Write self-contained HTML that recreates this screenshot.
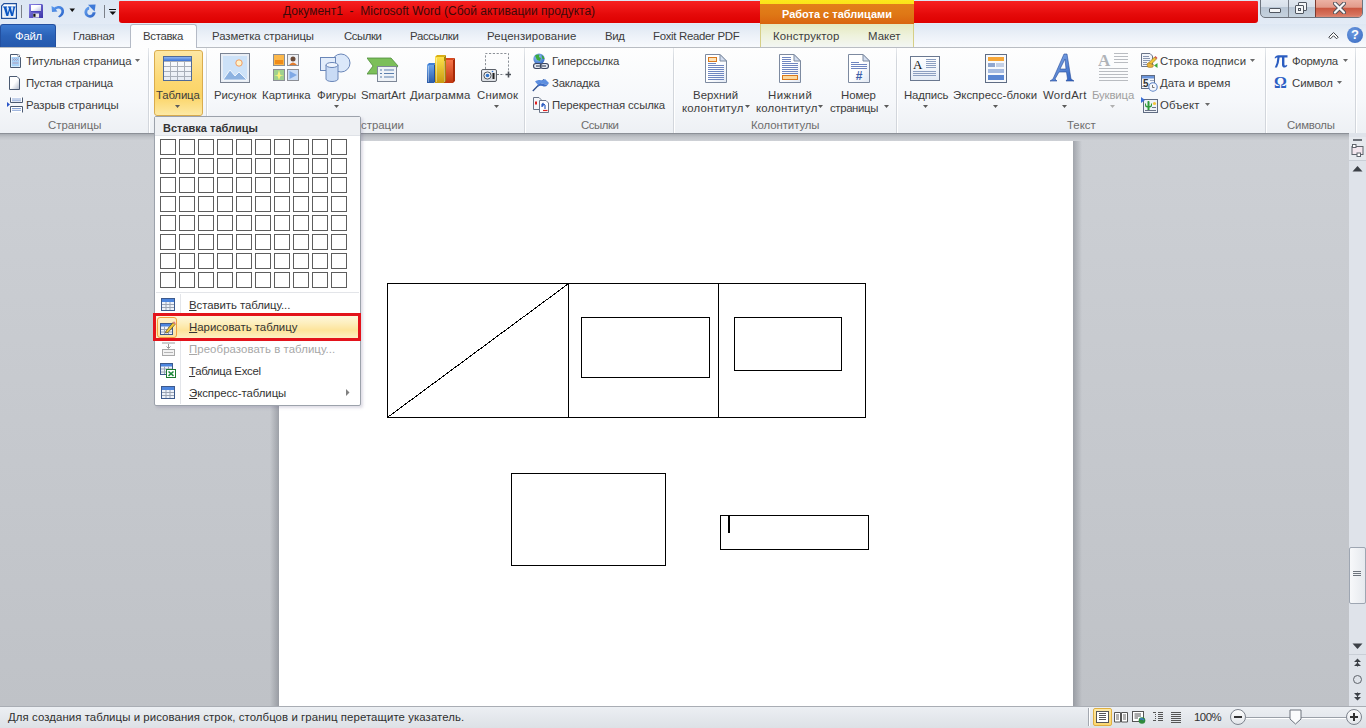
<!DOCTYPE html>
<html><head><meta charset="utf-8">
<style>
*{box-sizing:border-box;margin:0;padding:0}
html,body{width:1366px;height:728px;overflow:hidden;background:#c6c9cf;font-family:"Liberation Sans",sans-serif;font-size:11.4px;color:#3c3c3c}
.a{position:absolute}
.t{position:absolute;white-space:nowrap;line-height:14px}
#title{left:0;top:0;width:1366px;height:24px;background:linear-gradient(#dbe6f3,#e3ebf6)}
#redbar{left:119px;top:1px;width:1139px;height:22px;border-radius:1px 1px 3px 3px;background:linear-gradient(#f72121,#e50a0a 60%,#de0000)}
#tabs{left:0;top:24px;width:1366px;height:23px;background:linear-gradient(#dde7f3,#ecf1f8 50%,#f8fafd)}
#ribbon{left:0;top:47px;width:1366px;height:87px;background:linear-gradient(#fefefe,#f6f8fb 60%,#edf0f4);border-top:1px solid #b9bdc3}
#rbot{left:0;top:133px;width:1366px;height:1px;background:#8c9097}
#docshadow{left:0;top:134px;width:1349px;height:6px;background:linear-gradient(#a9adb3,#c0c3c8 50%,#cbced3)}
#doc{left:0;top:133px;width:1349px;height:573px;background:linear-gradient(#cdd0d5,#bfc2c7)}
#page{left:279px;top:141px;width:794px;height:565px;background:#fff}
#status{left:0;top:706px;width:1366px;height:22px;background:linear-gradient(#eceff3,#dde1e6);border-top:1px solid #a9adb4}
#vscroll{left:1349px;top:133px;width:17px;height:573px;background:#dfe3ea}
.sep{position:absolute;width:1px;background:linear-gradient(#e6e9ed,#d2d6dc 15%,#d2d6dc);box-shadow:1px 0 0 #fff}
.gl{position:absolute;top:118px;color:#6d6d6d;line-height:14px;white-space:nowrap}
</style></head><body>
<div id="title" class="a"></div>
<div id="redbar" class="a"></div>
<div id="tabs" class="a"></div>
<div id="ribbon" class="a"></div>
<!-- ===== RIBBON ===== -->
<div class="sep" style="left:148px;top:48px;height:85px"></div>
<div class="sep" style="left:206px;top:48px;height:85px"></div>
<div class="sep" style="left:524px;top:48px;height:85px"></div>
<div class="sep" style="left:673px;top:48px;height:85px"></div>
<div class="sep" style="left:896px;top:48px;height:85px"></div>
<div class="sep" style="left:1265px;top:48px;height:85px"></div>
<div class="sep" style="left:1355px;top:48px;height:85px"></div>
<!-- Страницы -->
<svg class="a" style="left:9px;top:53px" width="13" height="16" viewBox="0 0 13 16">
 <path d="M1.5 1.5 H8.5 L11.5 4.5 V14.5 H1.5Z" fill="#fff" stroke="#4b5a72"/>
 <rect x="2.5" y="4" width="8" height="9.5" fill="#a8d2f8"/>
 <path d="M3.5 5.5 L4.5 6.5 L5.5 5.5 L6.5 6.5 L7.5 5.5 L8.5 6.5 L9.5 5.5 M3.5 7.5 L4.5 6.5 L5.5 7.5 L6.5 6.5 L7.5 7.5 L8.5 6.5 L9.5 7.5" stroke="#a58aa8" stroke-width="0.6" fill="none"/>
 <path d="M3.5 10 H9.5" stroke="#b58aa0" stroke-width="0.7"/>
 <circle cx="9.6" cy="2.6" r="1" fill="#fff" stroke="#4b5a72" stroke-width="0.6"/>
</svg>
<div class="t" style="left:26px;top:54px;letter-spacing:-0.10px">Титульная страница</div>
<svg class="a" style="left:135px;top:59px" width="6" height="4" viewBox="0 0 6 4"><path d="M0 0H5L2.5 3Z" fill="#6a6a6a"/></svg>
<svg class="a" style="left:8px;top:75px" width="13" height="16" viewBox="0 0 13 16">
 <defs><linearGradient id="pg1" x1="0" y1="0" x2="1" y2="1"><stop offset="0.5" stop-color="#fff"/><stop offset="1" stop-color="#aeb7c7"/></linearGradient></defs>
 <path d="M1.5 1.5 H9 L11.5 4 V14.5 H1.5Z" fill="url(#pg1)" stroke="#4b5a72"/>
</svg>
<div class="t" style="left:26px;top:76px;letter-spacing:-0.15px">Пустая страница</div>
<svg class="a" style="left:7px;top:97px" width="17" height="16" viewBox="0 0 17 16">
 <path d="M3.5 0.5 V5.5 H15.5 V0.5" fill="#fff" stroke="#4b5a72"/>
 <path d="M5 2 H14 M5 3.8 H14" stroke="#8aa6d8"/>
 <path d="M3.5 15.5 V9.5 H15.5 V15.5" fill="#fff" stroke="#4b5a72"/>
 <path d="M5 11.5 H14 M5 13.3 H14" stroke="#8aa6d8"/>
 <path d="M0 5 L3 7.5 L0 10Z" fill="#2a55c8"/>
</svg>
<div class="t" style="left:26px;top:98px;letter-spacing:-0.05px">Разрыв страницы</div>
<div class="gl" style="left:48px;letter-spacing:-0.01px">Страницы</div>
<!-- Таблица button -->
<div class="a" style="left:154px;top:50px;width:49px;height:66px;border:1px solid #d9ac4e;border-radius:3px;background:linear-gradient(#fde7a4,#fcd873 45%,#fbd466 70%,#fde9a5)"></div>
<svg class="a" style="left:163px;top:56px" width="30" height="26" viewBox="0 0 30 26" shape-rendering="crispEdges">
 <defs><linearGradient id="th" x1="0" y1="0" x2="0" y2="1"><stop offset="0" stop-color="#8db4f0"/><stop offset="1" stop-color="#3d72d4"/></linearGradient>
 <linearGradient id="tc" x1="0" y1="0" x2="0" y2="1"><stop offset="0" stop-color="#ffffff"/><stop offset="1" stop-color="#e6ebf3"/></linearGradient></defs>
 <rect x="0.5" y="0.5" width="28" height="24" fill="url(#tc)" stroke="#4f6a98"/>
 <rect x="1" y="1" width="27" height="4" fill="url(#th)"/>
 <path d="M1 5.5 H28 M1 10.5 H28 M1 15.5 H28 M1 20.5 H28 M7.5 5 V24 M14.5 5 V24 M21.5 5 V24" stroke="#a9afb9"/>
</svg>
<div class="t" style="left:156px;top:88px;letter-spacing:-0.14px">Таблица</div>
<svg class="a" style="left:175px;top:105px" width="6" height="4" viewBox="0 0 6 4"><path d="M0 0H5L2.5 3Z" fill="#5a5a5a"/></svg>
<!-- Иллюстрации -->
<svg class="a" style="left:220px;top:53px" width="31" height="31" viewBox="0 0 31 31">
 <rect x="0.5" y="0.5" width="29" height="29" fill="#e9eef5" stroke="#7b8494"/>
 <rect x="3" y="3" width="24" height="24" fill="#cde2f8"/>
 <circle cx="19" cy="10" r="3.2" fill="#fff2c8" stroke="#f09a62" stroke-width="1"/>
 <path d="M3 27 L10 17 L15 23 L19 19 L27 27Z" fill="#8db2e0" stroke="#fff" stroke-width="0.8"/>
</svg>
<div class="t" style="left:214px;top:88px;letter-spacing:-0.10px">Рисунок</div>
<svg class="a" style="left:273px;top:54px" width="26" height="28" viewBox="0 0 26 28">
 <rect x="0.5" y="0.5" width="11" height="11" fill="#fcb84b" stroke="#8c8f96"/>
 <rect x="2" y="6" width="8" height="4" fill="#f08c1a"/>
 <rect x="14.5" y="0.5" width="11" height="11" fill="#eef0f4" stroke="#8c8f96"/>
 <circle cx="20" cy="5" r="2.5" fill="#6b4b3a"/><path d="M16 11 Q20 6 24 11Z" fill="#e27b2c"/>
 <rect x="0.5" y="15.5" width="11" height="11" fill="#9fd18e" stroke="#8c8f96"/>
 <path d="M6 16 L7.5 21 L11 21.5 L7.5 22 L6 26 L4.5 22 L1 21.5 L4.5 21Z" fill="#f8f27a"/>
 <rect x="14.5" y="15.5" width="11" height="11" fill="#c9dcf5" stroke="#8c8f96"/>
 <path d="M16.5 17 L24 21 L16.5 25Z" fill="#7fa9e6"/>
</svg>
<div class="t" style="left:262px;top:88px;letter-spacing:0.03px">Картинка</div>
<svg class="a" style="left:320px;top:53px" width="31" height="31" viewBox="0 0 31 31">
 <circle cx="21" cy="10" r="9" fill="#dbe8fa" stroke="#6a86b8"/>
 <rect x="0.5" y="4.5" width="15" height="13" fill="#e3edfb" stroke="#6a86b8"/>
 <path d="M6 12 V26 A6 2.5 0 0 0 18 26 V12" fill="#c9dbf5" stroke="#6a86b8"/>
 <ellipse cx="12" cy="12" rx="6" ry="2.5" fill="#eef4fd" stroke="#6a86b8"/>
</svg>
<div class="t" style="left:317px;top:88px;letter-spacing:-0.03px">Фигуры</div>
<svg class="a" style="left:334px;top:105px" width="6" height="4" viewBox="0 0 6 4"><path d="M0 0H5L2.5 3Z" fill="#5a5a5a"/></svg>
<svg class="a" style="left:367px;top:56px" width="32" height="27" viewBox="0 0 32 27">
 <path d="M0 2 H24 L31 10 L24 18 H0 L6 10Z" fill="#7cbf5a" stroke="#4e8d3a" stroke-width="0.8"/>
 <rect x="10.5" y="10.5" width="19" height="15" fill="#eef2f7" stroke="#7d8797"/>
 <path d="M13 14 H15 M17 14 H27 M13 17.5 H15 M17 17.5 H27 M13 21 H15 M17 21 H27" stroke="#5b7fae" stroke-width="1.2"/>
</svg>
<div class="t" style="left:361px;top:88px;letter-spacing:-0.09px">SmartArt</div>
<svg class="a" style="left:427px;top:54px" width="30" height="30" viewBox="0 0 30 30">
 <defs>
  <linearGradient id="cb" x1="0" y1="0" x2="0" y2="1"><stop offset="0" stop-color="#6aa2e6"/><stop offset="1" stop-color="#2a5aa8"/></linearGradient>
  <linearGradient id="cy" x1="0" y1="0" x2="0" y2="1"><stop offset="0" stop-color="#fde24a"/><stop offset="1" stop-color="#c89a10"/></linearGradient>
  <linearGradient id="cr" x1="0" y1="0" x2="0" y2="1"><stop offset="0" stop-color="#f6764a"/><stop offset="1" stop-color="#c0360e"/></linearGradient>
 </defs>
 <path d="M0 11 L2 9 H9 L7 11Z" fill="#3f7fd6"/><rect x="0" y="11" width="7" height="18" fill="url(#cb)"/><path d="M7 11 L9 9 V27 L7 29Z" fill="#1f4f9e"/>
 <path d="M16 6 L18 4 H28 L26 6Z" fill="#d8481e"/><rect x="16" y="6" width="10" height="23" fill="url(#cr)"/><path d="M26 6 L28 4 V27 L26 29Z" fill="#a82a08"/>
 <path d="M8 3 L10 1 H19 L17 3Z" fill="#d9b014"/><rect x="8" y="3" width="9" height="26" fill="url(#cy)"/><path d="M17 3 L19 1 V27 L17 29Z" fill="#a88408"/>
 <path d="M1.5 12 V28 M9.5 4 V28 M17.5 7 V28" stroke="#fff" stroke-opacity="0.5" stroke-width="0.8"/>
</svg>
<div class="t" style="left:410px;top:88px;letter-spacing:0.13px">Диаграмма</div>
<svg class="a" style="left:480px;top:52px" width="32" height="31" viewBox="0 0 32 31">
 <path d="M5.5 17 V1.5 H28.5 V21" fill="none" stroke="#8c9198" stroke-width="1" stroke-dasharray="2.2 1.6"/>
 <rect x="1.5" y="17.5" width="15" height="12" rx="1.5" fill="#dcdfe4" stroke="#5b6068"/>
 <rect x="2.5" y="18.5" width="13" height="2" fill="#f4f5f7"/>
 <circle cx="7.5" cy="23.5" r="3.6" fill="#f0f2f4" stroke="#50555c"/>
 <circle cx="7.5" cy="23.5" r="1.8" fill="#2f74cc"/>
 <rect x="12.5" y="21" width="2" height="6" fill="#222"/>
 <circle cx="12.5" cy="19.5" r="0.8" fill="#2f74cc"/>
 <path d="M17 22.5 H24" stroke="#777c84" stroke-width="1.2" stroke-dasharray="2 1.4"/>
 <path d="M25.5 22.5 H31 M28.5 19.5 V25.5" stroke="#4a4f57" stroke-width="1.6"/>
</svg>
<div class="t" style="left:477px;top:88px;letter-spacing:0.18px">Снимок</div>
<svg class="a" style="left:494px;top:105px" width="6" height="4" viewBox="0 0 6 4"><path d="M0 0H5L2.5 3Z" fill="#5a5a5a"/></svg>
<div class="gl" style="left:331px">Иллюстрации</div>
<!-- Ссылки -->
<svg class="a" style="left:532px;top:53px" width="18" height="17" viewBox="0 0 18 17">
 <defs><radialGradient id="gl" cx="0.4" cy="0.35" r="0.7"><stop offset="0" stop-color="#9fd0ff"/><stop offset="1" stop-color="#2f62c0"/></radialGradient></defs>
 <circle cx="7" cy="6" r="5.6" fill="url(#gl)"/>
 <path d="M3 2.5 Q5 1 7.5 1.5 L7 4 L9 5 L8 8 L5 7 L4 5 Z M9.5 2 Q12 3 12.5 6 L10.5 6 Z" fill="#3caa3c"/>
 <g fill="#e4e9f2" stroke="#3a4560" stroke-width="1.1">
  <rect x="1.5" y="10.5" width="8" height="5" rx="2.5"/>
  <rect x="8.5" y="10.5" width="8" height="5" rx="2.5"/>
 </g>
 <path d="M4 13 H14" stroke="#3a4560" stroke-width="1.1"/>
</svg>
<div class="t" style="left:552px;top:54px;letter-spacing:-0.11px">Гиперссылка</div>
<svg class="a" style="left:532px;top:75px" width="18" height="17" viewBox="0 0 18 17">
 <path d="M0.8 16 L12 4.5" stroke="#2f4f8e" stroke-width="1.3"/>
 <path d="M6 10 Q9 7.5 12 9 Q15 10.5 17 8 L13 4 Q11 6 8 5 Q5 4.5 3 6.5Z" fill="#5c8ee0"/>
 <path d="M6 10 Q9 7.5 12 9 Q15 10.5 17 8 L15.5 10 Q13.5 12.5 10.5 11 Q8 10 5.5 12Z" fill="#3f6fc8"/>
</svg>
<div class="t" style="left:552px;top:76px;letter-spacing:-0.24px">Закладка</div>
<svg class="a" style="left:533px;top:97px" width="17" height="17" viewBox="0 0 17 17">
 <path d="M0.5 0.5 H6 L8 2.5 V12.5 H0.5Z" fill="#f4f6fa" stroke="#6a7488"/>
 <rect x="2" y="4.5" width="2" height="3" fill="#e02020"/>
 <path d="M6.5 3.5 H13 L15.5 6 V15.5 H6.5Z" fill="#fff" stroke="#6a7488"/>
 <path d="M9 10 L9 7.5 L12 7.5 M9 7.5 L10.5 6 M9 7.5 L10.5 9" stroke="#2d5ec2" stroke-width="1.2" fill="none"/>
 <path d="M12 8 V12" stroke="#2d5ec2" stroke-width="1.2"/>
 <path d="M10 13.5 H14.5" stroke="#e02020" stroke-width="1.2"/>
</svg>
<div class="t" style="left:552px;top:98px;letter-spacing:-0.13px">Перекрестная ссылка</div>
<div class="gl" style="left:581px;letter-spacing:-0.44px">Ссылки</div>
<!-- Колонтитулы -->
<svg class="a" style="left:705px;top:54px" width="23" height="30" viewBox="0 0 23 30">
 <defs><linearGradient id="dg1" x1="0" y1="0" x2="1" y2="1"><stop offset="0.5" stop-color="#fff"/><stop offset="1" stop-color="#e2e9f4"/></linearGradient></defs>
 <path d="M0.5 0.5 H15 L21.5 7 V28.5 H0.5Z" fill="url(#dg1)" stroke="#7d8aa0"/>
 <path d="M15 0.5 V7 H21.5Z" fill="#d4def0" stroke="#7d8aa0" stroke-linejoin="round"/>
 <g shape-rendering="crispEdges"><rect x="3.5" y="3.5" width="8" height="4" fill="#fde3b8" stroke="#d9791e"/><path d="M3 9.5 H11 M3 11.5 H19 M3 13.5 H19 M3 15.5 H19 M3 17.5 H19 M3 19.5 H19 M3 21.5 H19 M3 23.5 H19 M3 25.5 H19" stroke="#6f86c0"/></g>
</svg>
<div class="t" style="left:693px;top:88px;letter-spacing:0.04px">Верхний</div>
<div class="t" style="left:682px;top:101px;letter-spacing:0.19px">колонтитул</div>
<svg class="a" style="left:745px;top:105px" width="6" height="4" viewBox="0 0 6 4"><path d="M0 0H5L2.5 3Z" fill="#5a5a5a"/></svg>
<svg class="a" style="left:779px;top:54px" width="23" height="30" viewBox="0 0 23 30">
 <defs><linearGradient id="dg2" x1="0" y1="0" x2="1" y2="1"><stop offset="0.5" stop-color="#fff"/><stop offset="1" stop-color="#e2e9f4"/></linearGradient></defs>
 <path d="M0.5 0.5 H15 L21.5 7 V28.5 H0.5Z" fill="url(#dg2)" stroke="#7d8aa0"/>
 <path d="M15 0.5 V7 H21.5Z" fill="#d4def0" stroke="#7d8aa0" stroke-linejoin="round"/>
 <g shape-rendering="crispEdges"><path d="M3 3.5 H12 M3 5.5 H12 M3 7.5 H12 M3 9.5 H19 M3 11.5 H19 M3 13.5 H19 M3 15.5 H19 M3 17.5 H19 M3 19.5 H19" stroke="#6f86c0"/><rect x="3.5" y="21.5" width="15" height="4" fill="#fcd9a0" stroke="#d9791e"/></g>
</svg>
<div class="t" style="left:768px;top:88px;letter-spacing:0.51px">Нижний</div>
<div class="t" style="left:756px;top:101px;letter-spacing:0.19px">колонтитул</div>
<svg class="a" style="left:818px;top:105px" width="6" height="4" viewBox="0 0 6 4"><path d="M0 0H5L2.5 3Z" fill="#5a5a5a"/></svg>
<svg class="a" style="left:848px;top:54px" width="23" height="30" viewBox="0 0 23 30">
 <defs><linearGradient id="dg3" x1="0" y1="0" x2="1" y2="1"><stop offset="0.5" stop-color="#fff"/><stop offset="1" stop-color="#e2e9f4"/></linearGradient></defs>
 <path d="M0.5 0.5 H15 L21.5 7 V28.5 H0.5Z" fill="url(#dg3)" stroke="#7d8aa0"/>
 <path d="M15 0.5 V7 H21.5Z" fill="#d4def0" stroke="#7d8aa0" stroke-linejoin="round"/>
 <g shape-rendering="crispEdges"><path d="M3 8.5 H11 M3 10.5 H19 M3 12.5 H19 M3 14.5 H19" stroke="#6f86c0"/></g>
 <text x="11" y="26" font-family="Liberation Sans" font-weight="bold" font-size="12" fill="#3e5fa8" text-anchor="middle">#</text>
</svg>
<div class="t" style="left:841px;top:88px;letter-spacing:-0.05px">Номер</div>
<div class="t" style="left:830px;top:101px;letter-spacing:-0.37px">страницы</div>
<svg class="a" style="left:884px;top:105px" width="6" height="4" viewBox="0 0 6 4"><path d="M0 0H5L2.5 3Z" fill="#5a5a5a"/></svg>
<div class="gl" style="left:751px;letter-spacing:-0.08px">Колонтитулы</div>
<!-- Текст -->
<svg class="a" style="left:910px;top:56px" width="30" height="25" viewBox="0 0 30 25">
 <defs><linearGradient id="nd" x1="0" y1="0" x2="0" y2="1"><stop offset="0" stop-color="#fff"/><stop offset="1" stop-color="#e4ecf6"/></linearGradient></defs>
 <rect x="0.5" y="0.5" width="29" height="24" fill="url(#nd)" stroke="#6a7890"/>
 <text x="3" y="13" font-family="Liberation Serif" font-size="13" fill="#111">A</text>
 <g shape-rendering="crispEdges" stroke="#8c9fc0" stroke-width="1"><path d="M16 3.5 H26 M16 5.5 H26 M16 7.5 H26 M16 9.5 H26 M16 11.5 H26 M3 15.5 H26 M3 17.5 H26 M3 19.5 H26"/></g>
</svg>
<div class="t" style="left:904px;top:88px;letter-spacing:-0.15px">Надпись</div>
<svg class="a" style="left:923px;top:105px" width="6" height="4" viewBox="0 0 6 4"><path d="M0 0H5L2.5 3Z" fill="#5a5a5a"/></svg>
<svg class="a" style="left:985px;top:54px" width="23" height="30" viewBox="0 0 23 30">
 <rect x="0.5" y="0.5" width="21" height="28" fill="#f7f9fc" stroke="#5e6c84"/>
 <rect x="3" y="3" width="16" height="4" fill="#f6a637"/>
 <rect x="3" y="9" width="7" height="4" fill="#8fa6cf"/><path d="M11 10 H19 M11 12 H19" stroke="#8fa6cf"/>
 <rect x="3" y="15" width="16" height="4" fill="#a6bbe0"/>
 <rect x="3" y="21" width="16" height="5" fill="#5a86d2"/>
</svg>
<div class="t" style="left:953px;top:88px;letter-spacing:0.04px">Экспресс-блоки</div>
<svg class="a" style="left:993px;top:105px" width="6" height="4" viewBox="0 0 6 4"><path d="M0 0H5L2.5 3Z" fill="#5a5a5a"/></svg>
<svg class="a" style="left:1049px;top:53px" width="26" height="30" viewBox="0 0 26 30">
 <defs><linearGradient id="wa" x1="0" y1="0" x2="1" y2="1"><stop offset="0" stop-color="#8fb4ec"/><stop offset="1" stop-color="#2b5fc0"/></linearGradient></defs>
 <path d="M15 1 L18 1 L22 26 L25 28 L17 28 L18.5 26 L17.5 19 L10 19 L6 26 L8 28 L1 28 L4 26Z M16 6 L11 16 L17 16Z" fill="url(#wa)" stroke="#254a98" stroke-width="0.6"/>
</svg>
<div class="t" style="left:1043px;top:88px;letter-spacing:0.29px">WordArt</div>
<svg class="a" style="left:1062px;top:105px" width="6" height="4" viewBox="0 0 6 4"><path d="M0 0H5L2.5 3Z" fill="#5a5a5a"/></svg>
<svg class="a" style="left:1098px;top:52px" width="32" height="32" viewBox="0 0 32 32">
 <text x="0" y="14" font-family="Liberation Serif" font-weight="bold" font-size="17" fill="#b0b3b8">A</text>
 <g shape-rendering="crispEdges" stroke="#b9bcc1" stroke-width="1"><path d="M16 1.5 H30 M16 4.5 H30 M16 7.5 H30 M16 10.5 H30 M1 16.5 H30 M1 19.5 H30 M1 22.5 H30 M1 25.5 H30 M1 28.5 H30"/></g>
</svg>
<div class="t" style="left:1092px;top:88px;color:#a0a0a0;letter-spacing:-0.15px">Буквица</div>
<svg class="a" style="left:1110px;top:105px" width="6" height="4" viewBox="0 0 6 4"><path d="M0 0H5L2.5 3Z" fill="#b0b0b0"/></svg>
<svg class="a" style="left:1141px;top:53px" width="17" height="16" viewBox="0 0 17 16">
 <path d="M0.5 0.5 H9 L11.5 3 V13.5 H0.5Z" fill="#f2f5fa" stroke="#6a7488"/>
 <g shape-rendering="crispEdges"><path d="M2 3.5 H8 M2 5.5 H9 M2 7.5 H9 M2 9.5 H6 M2 11.5 H6" stroke="#8a96b0"/></g>
 <path d="M13.5 4 L15.5 6 L9 12.5 L7 10.5Z" fill="#f2c43a" stroke="#8a6a10" stroke-width="0.6"/>
 <path d="M13.5 4 L14.5 3 L16.5 5 L15.5 6Z" fill="#d0504a"/>
 <path d="M6 11 Q7.5 9 9.5 10.5 Q11 12 12.5 11.5 L12 14 Q9 15 6.5 14Z" fill="#e8b23a" stroke="#9a6a18" stroke-width="0.5"/>
 <path d="M13 12.5 L16.5 10 V15Z" fill="#3aa83a"/>
</svg>
<div class="t" style="left:1160px;top:54px;letter-spacing:0.13px">Строка подписи</div>
<svg class="a" style="left:1250px;top:59px" width="6" height="4" viewBox="0 0 6 4"><path d="M0 0H5L2.5 3Z" fill="#6a6a6a"/></svg>
<svg class="a" style="left:1141px;top:75px" width="17" height="17" viewBox="0 0 17 17">
 <rect x="0.5" y="0.5" width="13" height="13" fill="#f4f6fa" stroke="#5f6b82"/>
 <rect x="1" y="1" width="12" height="2.5" fill="#6a94da"/>
 <g shape-rendering="crispEdges"><path d="M9 5.5 H13 M9 8.5 H13 M1 11.5 H5" stroke="#9aa6bc"/></g>
 <text x="2" y="12" font-family="Liberation Sans" font-weight="bold" font-size="10" fill="#333">5</text>
 <circle cx="12" cy="12" r="4.2" fill="#f4f7fc" stroke="#5b82c4" stroke-width="1.1"/>
 <path d="M11.5 10 V12.5 H13.5" stroke="#555" stroke-width="0.8" fill="none"/>
</svg>
<div class="t" style="left:1160px;top:76px;letter-spacing:-0.03px">Дата и время</div>
<svg class="a" style="left:1141px;top:97px" width="17" height="16" viewBox="0 0 17 16">
 <rect x="2.5" y="2.5" width="14" height="13" fill="#eef2f8" stroke="#5f6b82"/>
 <path d="M0 0 L4 3 L0 6Z" fill="#3a6fd8"/>
 <path d="M7 4 Q8.5 3.5 8.5 5 V9 Q10 9 10 7.5 V6.5 H11 V8 Q11 10.5 8.5 10.5 V13 H6.5 V10.5 Q4 10.5 4 8 V6.5 H5 V7.5 Q5 9 6.5 9 V5 Q6.5 4 7 4Z" fill="#2f9a3a"/>
 <circle cx="13.5" cy="6.5" r="1.6" fill="#f2c43a"/>
 <g shape-rendering="crispEdges"><path d="M11 10.5 H15 M4 13.5 H15" stroke="#6a7488"/></g>
</svg>
<div class="t" style="left:1160px;top:98px;letter-spacing:0.12px">Объект</div>
<svg class="a" style="left:1205px;top:103px" width="6" height="4" viewBox="0 0 6 4"><path d="M0 0H5L2.5 3Z" fill="#6a6a6a"/></svg>
<div class="gl" style="left:1067px">Текст</div>
<!-- Символы -->
<svg class="a" style="left:1274px;top:54px" width="14" height="14" viewBox="0 0 14 14"><path d="M0.5 4 Q1.5 1.2 4 1.2 H13.5 V3.6 H10.4 V10.4 Q10.4 11.6 11.6 11.6 Q12.4 11.6 12.8 10.8 L13.4 11.2 Q12.6 13.6 10.6 13.6 Q8 13.6 8 10.8 V3.6 H5.6 Q5.2 9.4 3 13.4 H0.8 Q3.2 9 3.4 3.6 Q2 3.6 1.2 4.6Z" fill="#2a5cc0"/></svg>
<div class="t" style="left:1292px;top:54px;letter-spacing:-0.26px">Формула</div>
<svg class="a" style="left:1343px;top:59px" width="6" height="4" viewBox="0 0 6 4"><path d="M0 0H5L2.5 3Z" fill="#6a6a6a"/></svg>
<div class="t" style="left:1274px;top:74px;font-family:'Liberation Serif';font-size:16px;color:#2d5fc4;line-height:18px;font-weight:bold">Ω</div>
<div class="t" style="left:1292px;top:76px;letter-spacing:-0.06px">Символ</div>
<svg class="a" style="left:1337px;top:81px" width="6" height="4" viewBox="0 0 6 4"><path d="M0 0H5L2.5 3Z" fill="#6a6a6a"/></svg>
<div class="gl" style="left:1287px;letter-spacing:-0.22px">Символы</div>

<div id="doc" class="a"></div>
<div id="docshadow" class="a"></div>
<div id="rbot" class="a"></div>
<div id="page" class="a"></div>
<div id="vscroll" class="a"></div>
<div id="status" class="a"></div>
<!-- page shadows -->
<div class="a" style="left:270px;top:141px;width:9px;height:565px;background:linear-gradient(90deg,rgba(0,0,0,0),rgba(80,85,95,0.35))"></div>
<div class="a" style="left:1073px;top:141px;width:9px;height:565px;background:linear-gradient(90deg,rgba(80,85,95,0.35),rgba(0,0,0,0))"></div>
<svg class="a" style="left:0;top:0" width="1366" height="728" shape-rendering="crispEdges">
 <g fill="none" stroke="#000" stroke-width="1">
  <rect x="387.5" y="283.5" width="478" height="134"/>
  <path d="M568.5 283.5 V417.5 M718.5 283.5 V417.5"/>
  <rect x="581.5" y="317.5" width="128" height="60"/>
  <rect x="734.5" y="317.5" width="107" height="53"/>
  <rect x="511.5" y="473.5" width="154" height="92"/>
  <rect x="720.5" y="515.5" width="148" height="34"/>
  <path d="M388 417 L568 284"/>
 </g>
 <rect x="728" y="516" width="2" height="17" fill="#000"/>
</svg>
<!-- scrollbar -->
<div class="a" style="left:1349px;top:137px;width:17px;height:24px;background:#e6e9ee;border-bottom:1px solid #c9ced6"></div>
<div class="a" style="left:1353px;top:139px;width:9px;height:2px;background:#6c7078"></div>
<svg class="a" style="left:1351px;top:144px" width="13" height="13" viewBox="0 0 13 13">
 <rect x="1" y="2.5" width="11" height="8" fill="#f3e6ee" stroke="#5f646c"/>
 <rect x="1.5" y="0.5" width="3.5" height="3" fill="#fff" stroke="#5f646c"/>
 <rect x="6" y="9" width="3.5" height="3.5" fill="#fff" stroke="#5f646c"/>
</svg>
<svg class="a" style="left:1352px;top:165px" width="11" height="7" viewBox="0 0 11 7"><path d="M0.5 6.5 L5.5 1 L10.5 6.5Z" fill="#3c4047"/></svg>
<div class="a" style="left:1349px;top:547px;width:17px;height:57px;border:1px solid #9ea6b2;border-radius:2px;background:linear-gradient(90deg,#f7f8fa,#e6e9ee)"></div>
<div class="a" style="left:1353px;top:571px;width:8px;height:6px;background:repeating-linear-gradient(#6d737c 0 1px,transparent 1px 2px)"></div>
<svg class="a" style="left:1352px;top:643px" width="11" height="7" viewBox="0 0 11 7"><path d="M0.5 0.5 L5.5 6 L10.5 0.5Z" fill="#3c4047"/></svg>
<div class="a" style="left:1349px;top:654px;width:17px;height:1px;background:#c9ced6"></div>
<svg class="a" style="left:1353px;top:658px" width="9" height="9" viewBox="0 0 9 9"><path d="M1 4 L4.5 0.5 L8 4Z M1 8 L4.5 4.5 L8 8Z" fill="#3c4047"/><path d="M4 4 H5 V8.5 H4Z" fill="#3c4047"/></svg>
<div class="a" style="left:1353px;top:675px;width:9px;height:9px;border:1.2px solid #5f646c;border-radius:50%"></div>
<svg class="a" style="left:1353px;top:692px" width="9" height="9" viewBox="0 0 9 9"><path d="M1 1 L4.5 4.5 L8 1Z M1 5 L4.5 8.5 L8 5Z" fill="#3c4047"/><path d="M4 0.5 H5 V5 H4Z" fill="#3c4047"/></svg>
<!-- status bar -->
<div class="t" style="left:8px;top:710px;color:#2f2f2f;letter-spacing:0.08px">Для создания таблицы и рисования строк, столбцов и границ перетащите указатель.</div>
<div class="a" style="left:1088px;top:708px;width:1px;height:18px;background:#a3a8b0;box-shadow:1px 0 0 #fff"></div>
<div class="a" style="left:1093px;top:708px;width:19px;height:18px;border:1px solid #e0b040;border-radius:2px;background:linear-gradient(#fde9a8,#fbd770)"></div>
<svg class="a" style="left:1096px;top:711px" width="13" height="12" viewBox="0 0 13 12" shape-rendering="crispEdges"><rect x="0.5" y="0.5" width="12" height="11" fill="#fff" stroke="#555"/><path d="M3 2.5 H10 M3 4.5 H10 M3 6.5 H10 M3 8.5 H10" stroke="#555"/></svg>
<svg class="a" style="left:1114px;top:711px" width="14" height="12" viewBox="0 0 14 12"><path d="M0.5 1.5 H6.5 V11 H0.5Z M7.5 1.5 H13.5 V11 H7.5Z" fill="#fff" stroke="#555"/><path d="M2 4 H5 M2 6 H5 M2 8 H5 M9 4 H12 M9 6 H12 M9 8 H12" stroke="#666"/></svg>
<svg class="a" style="left:1132px;top:711px" width="14" height="13" viewBox="0 0 14 13"><rect x="0.5" y="0.5" width="11" height="10" fill="#fff" stroke="#555"/><path d="M2.5 3 H9 M2.5 5 H9 M2.5 7 H6" stroke="#555"/><circle cx="10" cy="9.5" r="3.3" fill="#2f8a3c"/><path d="M8 8 Q10 7 12 9" stroke="#3a78d0" stroke-width="1.5" fill="none"/></svg>
<svg class="a" style="left:1152px;top:711px" width="12" height="12" viewBox="0 0 12 12" shape-rendering="crispEdges"><path d="M1 1.5 H4 M6 1.5 H11 M3 3.5 H4 M6 3.5 H11 M3 5.5 H4 M6 5.5 H11 M3 7.5 H4 M6 7.5 H11 M1 9.5 H4 M6 9.5 H11" stroke="#555"/></svg>
<svg class="a" style="left:1170px;top:711px" width="12" height="12" viewBox="0 0 12 12" shape-rendering="crispEdges"><path d="M1 1.5 H11 M1 3.5 H11 M1 5.5 H11 M1 7.5 H11 M1 9.5 H11 M1 11.5 H11" stroke="#555"/></svg>
<div class="t" style="left:1194px;top:710px;color:#333;letter-spacing:-0.49px">100%</div>
<div class="a" style="left:1230px;top:709px;width:16px;height:16px;border:1px solid #7d838d;border-radius:50%;background:linear-gradient(#fdfdfd,#e2e5ea)"></div>
<div class="a" style="left:1234px;top:716px;width:8px;height:2px;background:#333"></div>
<div class="a" style="left:1246px;top:717px;width:100px;height:1px;background:#9aa0a8;box-shadow:0 1px 0 #fff"></div>
<svg class="a" style="left:1289px;top:709px" width="13" height="16" viewBox="0 0 13 16"><path d="M1 1 H12 V10 L6.5 15 L1 10Z" fill="#fafbfc" stroke="#6c727c"/></svg>
<div class="a" style="left:1346px;top:709px;width:16px;height:16px;border:1px solid #7d838d;border-radius:50%;background:linear-gradient(#fdfdfd,#e2e5ea)"></div>
<div class="a" style="left:1350px;top:716px;width:8px;height:2px;background:#333"></div>
<div class="a" style="left:1353px;top:713px;width:2px;height:8px;background:#333"></div>

<!-- QAT -->
<svg class="a" style="left:1px;top:3px" width="17" height="17" viewBox="0 0 17 17">
 <path d="M3 0.6 H15.4 V15.4 H0.6 V3Z" fill="#fff" stroke="#1f4f9c" stroke-width="1.2"/>
 <rect x="2.5" y="3" width="11" height="10.5" fill="#d7e5f8"/>
 <path d="M1.8 3.5 H6 V4.3 L5.4 4.5 L6.8 10 L8 5.5 L7.6 4.5 L7 4.3 V3.5 H10.6 V4.3 L9.8 4.5 L11.2 10 L12.4 4.5 L11.6 4.3 V3.5 H14.6 V4.3 L14 4.5 L12 13 H10.2 L8.6 7.8 L7.2 13 H5.4 L2.8 4.5 L1.8 4.3Z" fill="#0b56c2"/>
</svg>
<div class="a" style="left:21px;top:5px;width:1px;height:13px;background:#7b8089"></div>
<svg class="a" style="left:29px;top:4px" width="14" height="14" viewBox="0 0 14 14">
 <defs><linearGradient id="sv" x1="0" y1="0" x2="1" y2="1"><stop offset="0" stop-color="#8c86e6"/><stop offset="1" stop-color="#3a33a8"/></linearGradient>
 <linearGradient id="svl" x1="0" y1="0" x2="1" y2="1"><stop offset="0.4" stop-color="#fff"/><stop offset="1" stop-color="#b9bde0"/></linearGradient></defs>
 <path d="M0 0 H13 L14 1 V14 H0Z" fill="url(#sv)"/>
 <rect x="2" y="1" width="10" height="6.5" fill="url(#svl)"/>
 <rect x="2" y="7" width="10" height="1" fill="#4a44b8"/>
 <rect x="4" y="9.5" width="6" height="4" fill="#e8e8e8"/>
 <rect x="4.3" y="9.8" width="2.2" height="3" fill="#111"/>
</svg>
<svg class="a" style="left:51px;top:4px" width="14" height="14" viewBox="0 0 14 14">
 <defs><linearGradient id="ud" x1="0" y1="0" x2="1" y2="1"><stop offset="0" stop-color="#5d9cf0"/><stop offset="1" stop-color="#2a62c8"/></linearGradient></defs>
 <path d="M0.5 2 L1 8 L6.5 7.5 L4.8 5.6 C7.2 3.6 10.2 4.4 10.4 7 C10.6 9.2 9 11 7 12.5 L8.6 13.6 C11.6 12 13.4 9.6 13 6.4 C12.4 2.2 7.6 0.6 3.4 3.6Z" fill="url(#ud)"/>
</svg>
<svg class="a" style="left:69px;top:8px" width="7" height="5" viewBox="0 0 7 5"><path d="M0.5 0.5 H6 L3.25 4Z" fill="#111"/></svg>
<svg class="a" style="left:83px;top:4px" width="14" height="14" viewBox="0 0 14 14">
 <defs><linearGradient id="rd" x1="0" y1="0" x2="1" y2="1"><stop offset="0" stop-color="#6aa6f2"/><stop offset="1" stop-color="#2a5fc4"/></linearGradient></defs>
 <path d="M6.2 2.6 A5.6 5.6 0 1 0 12.6 8.2 L9.6 8.2 A2.7 2.7 0 1 1 6.2 5.6Z" fill="url(#rd)"/>
 <path d="M5 0.8 L12.6 0.4 L11.6 7.6 Z" fill="#3f7ad8"/>
</svg>
<div class="a" style="left:104px;top:5px;width:1px;height:13px;background:#7b8089"></div>
<div class="a" style="left:109px;top:9px;width:7px;height:1px;background:#111"></div>
<svg class="a" style="left:109px;top:11px" width="8" height="5" viewBox="0 0 8 5"><path d="M0.5 0.5 H7 L3.75 4Z" fill="#111"/></svg>
<div class="t" style="left:283px;top:4px;font-size:12px;color:#3d0a0a;line-height:14px">Документ1&nbsp; - &nbsp;Microsoft Word (Сбой активации продукта)</div>
<!-- contextual tab -->
<div class="a" style="left:760px;top:0;width:154px;height:24px;background:linear-gradient(#fde81c 0,#fbe21a 4px,#e2801a 4px,#df7816 14px,#d9650f 24px)"></div>
<div class="t" style="left:782px;top:7px;font-size:11px;font-weight:bold;color:#fff">Работа с таблицами</div>
<div class="a" style="left:760px;top:24px;width:154px;height:23px;background:linear-gradient(#e5e9c0,#eef2dc 50%,#f3f6f3);border-left:1px solid #d6cf86;border-right:1px solid #d6cf86"></div>
<!-- window buttons -->
<div class="a" style="left:1260px;top:-3px;width:103px;height:21px;border:1px solid #6e747e;border-radius:0 0 5px 5px;background:linear-gradient(#e4eaf2 0,#d8e0ea 45%,#b8c5d4 46%,#c6d2de 100%);overflow:hidden">
 <div class="a" style="left:27px;top:0;width:1px;height:21px;background:#7a808a"></div>
 <div class="a" style="left:54px;top:0;width:48px;height:21px;background:linear-gradient(#eeb8ab 0,#e29a89 45%,#c9553e 46%,#d7735d 80%,#e2a090 100%);border-left:1px solid #7b3b30"></div>
</div>
<div class="a" style="left:1269px;top:8px;width:12px;height:5px;background:#f4f6f8;border:1px solid #505660;border-radius:1px"></div>
<div class="a" style="left:1298px;top:2px;width:9px;height:9px;background:#f4f6f8;border:1px solid #505660;border-radius:1px"></div>
<div class="a" style="left:1295px;top:5px;width:9px;height:9px;background:#f4f6f8;border:1px solid #505660;border-radius:1px"></div>
<div class="a" style="left:1298px;top:8px;width:3px;height:3px;border:1px solid #505660"></div>
<svg class="a" style="left:1333px;top:2px" width="13" height="12" viewBox="0 0 13 12"><path d="M2 1.5 L11 10.5 M11 1.5 L2 10.5" stroke="#50525a" stroke-width="4" stroke-linecap="round"/><path d="M2 1.5 L11 10.5 M11 1.5 L2 10.5" stroke="#f8f8f8" stroke-width="2.2" stroke-linecap="round"/></svg>
<svg class="a" style="left:1328px;top:31px" width="11" height="9" viewBox="0 0 11 9"><path d="M0.8 6.2 L5.5 1.5 L10.2 6.2 L8.6 7.8 L5.5 4.7 L2.4 7.8Z" fill="#fff" stroke="#3f434a" stroke-width="1" stroke-linejoin="round"/></svg>
<div class="a" style="left:1347px;top:27px;width:16px;height:16px;border-radius:50%;background:radial-gradient(circle at 40% 35%,#6d9ae0,#3568c0);text-align:center;color:#fff;font-weight:bold;font-size:13px;line-height:16px">?</div>

<!-- tabs -->
<div class="a" style="left:0;top:24px;width:56px;height:23px;background:linear-gradient(#3d7ad0,#2a62b8 50%,#2659ad);border-radius:3px 3px 0 0;border:1px solid #2350a0;border-bottom:none"></div>
<div class="t" style="left:15px;top:29px;color:#fff;letter-spacing:-0.25px">Файл</div>
<div class="a" style="left:130px;top:24px;width:67px;height:24px;background:linear-gradient(#fbfcfe,#fefefe);border:1px solid #b4bac6;border-bottom:none;border-radius:3px 3px 0 0"></div>
<div class="t" style="left:73px;top:29px;letter-spacing:-0.27px">Главная</div>
<div class="t" style="left:143px;top:29px;letter-spacing:-0.33px">Вставка</div>
<div class="t" style="left:212px;top:29px;letter-spacing:-0.08px">Разметка страницы</div>
<div class="t" style="left:344px;top:29px;letter-spacing:-0.44px">Ссылки</div>
<div class="t" style="left:410px;top:29px;letter-spacing:-0.33px">Рассылки</div>
<div class="t" style="left:487px;top:29px;letter-spacing:0.11px">Рецензирование</div>
<div class="t" style="left:605px;top:29px;letter-spacing:-0.37px">Вид</div>
<div class="t" style="left:653px;top:29px;letter-spacing:-0.30px">Foxit Reader PDF</div>
<div class="t" style="left:773px;top:29px;letter-spacing:0.14px">Конструктор</div>
<div class="t" style="left:868px;top:29px;letter-spacing:0.07px">Макет</div>

<!-- ===== MENU ===== -->
<div class="a" style="left:154px;top:116px;width:207px;height:290px;background:#fff;border:1px solid #9ca2ab;border-radius:2px;box-shadow:2px 2px 3px rgba(110,100,140,0.22)"></div>
<div class="a" style="left:155px;top:117px;width:205px;height:19px;background:#eef0f3;border-bottom:1px solid #dfe2e7"></div>
<div class="t" style="left:163px;top:121px;font-weight:bold;font-size:11px;color:#333">Вставка таблицы</div>
<svg class="a" style="left:0;top:0" width="400" height="300" shape-rendering="crispEdges">
 <g fill="none" stroke="#5d5d5d" stroke-width="1"><rect x="160.5" y="139.5" width="15" height="15"/><rect x="179.5" y="139.5" width="15" height="15"/><rect x="198.5" y="139.5" width="15" height="15"/><rect x="217.5" y="139.5" width="15" height="15"/><rect x="236.5" y="139.5" width="15" height="15"/><rect x="255.5" y="139.5" width="15" height="15"/><rect x="274.5" y="139.5" width="15" height="15"/><rect x="293.5" y="139.5" width="15" height="15"/><rect x="312.5" y="139.5" width="15" height="15"/><rect x="331.5" y="139.5" width="15" height="15"/><rect x="160.5" y="158.5" width="15" height="15"/><rect x="179.5" y="158.5" width="15" height="15"/><rect x="198.5" y="158.5" width="15" height="15"/><rect x="217.5" y="158.5" width="15" height="15"/><rect x="236.5" y="158.5" width="15" height="15"/><rect x="255.5" y="158.5" width="15" height="15"/><rect x="274.5" y="158.5" width="15" height="15"/><rect x="293.5" y="158.5" width="15" height="15"/><rect x="312.5" y="158.5" width="15" height="15"/><rect x="331.5" y="158.5" width="15" height="15"/><rect x="160.5" y="177.5" width="15" height="15"/><rect x="179.5" y="177.5" width="15" height="15"/><rect x="198.5" y="177.5" width="15" height="15"/><rect x="217.5" y="177.5" width="15" height="15"/><rect x="236.5" y="177.5" width="15" height="15"/><rect x="255.5" y="177.5" width="15" height="15"/><rect x="274.5" y="177.5" width="15" height="15"/><rect x="293.5" y="177.5" width="15" height="15"/><rect x="312.5" y="177.5" width="15" height="15"/><rect x="331.5" y="177.5" width="15" height="15"/><rect x="160.5" y="196.5" width="15" height="15"/><rect x="179.5" y="196.5" width="15" height="15"/><rect x="198.5" y="196.5" width="15" height="15"/><rect x="217.5" y="196.5" width="15" height="15"/><rect x="236.5" y="196.5" width="15" height="15"/><rect x="255.5" y="196.5" width="15" height="15"/><rect x="274.5" y="196.5" width="15" height="15"/><rect x="293.5" y="196.5" width="15" height="15"/><rect x="312.5" y="196.5" width="15" height="15"/><rect x="331.5" y="196.5" width="15" height="15"/><rect x="160.5" y="215.5" width="15" height="15"/><rect x="179.5" y="215.5" width="15" height="15"/><rect x="198.5" y="215.5" width="15" height="15"/><rect x="217.5" y="215.5" width="15" height="15"/><rect x="236.5" y="215.5" width="15" height="15"/><rect x="255.5" y="215.5" width="15" height="15"/><rect x="274.5" y="215.5" width="15" height="15"/><rect x="293.5" y="215.5" width="15" height="15"/><rect x="312.5" y="215.5" width="15" height="15"/><rect x="331.5" y="215.5" width="15" height="15"/><rect x="160.5" y="234.5" width="15" height="15"/><rect x="179.5" y="234.5" width="15" height="15"/><rect x="198.5" y="234.5" width="15" height="15"/><rect x="217.5" y="234.5" width="15" height="15"/><rect x="236.5" y="234.5" width="15" height="15"/><rect x="255.5" y="234.5" width="15" height="15"/><rect x="274.5" y="234.5" width="15" height="15"/><rect x="293.5" y="234.5" width="15" height="15"/><rect x="312.5" y="234.5" width="15" height="15"/><rect x="331.5" y="234.5" width="15" height="15"/><rect x="160.5" y="253.5" width="15" height="15"/><rect x="179.5" y="253.5" width="15" height="15"/><rect x="198.5" y="253.5" width="15" height="15"/><rect x="217.5" y="253.5" width="15" height="15"/><rect x="236.5" y="253.5" width="15" height="15"/><rect x="255.5" y="253.5" width="15" height="15"/><rect x="274.5" y="253.5" width="15" height="15"/><rect x="293.5" y="253.5" width="15" height="15"/><rect x="312.5" y="253.5" width="15" height="15"/><rect x="331.5" y="253.5" width="15" height="15"/><rect x="160.5" y="272.5" width="15" height="15"/><rect x="179.5" y="272.5" width="15" height="15"/><rect x="198.5" y="272.5" width="15" height="15"/><rect x="217.5" y="272.5" width="15" height="15"/><rect x="236.5" y="272.5" width="15" height="15"/><rect x="255.5" y="272.5" width="15" height="15"/><rect x="274.5" y="272.5" width="15" height="15"/><rect x="293.5" y="272.5" width="15" height="15"/><rect x="312.5" y="272.5" width="15" height="15"/><rect x="331.5" y="272.5" width="15" height="15"/></g>
</svg>
<div class="a" style="left:156px;top:292px;width:203px;height:1px;background:#e3e5e9"></div>
<div class="a" style="left:180px;top:294px;width:1px;height:110px;background:#e3e5e9"></div>
<!-- item 1 -->
<svg class="a" style="left:161px;top:298px" width="15" height="13" viewBox="0 0 15 13"><rect x="0.5" y="0.5" width="13" height="12" fill="#eef3fb" stroke="#3d5a8c"/><rect x="1" y="1" width="12" height="3" fill="#4d86df"/><path d="M1 6.5 H13 M1 9.5 H13 M5 4 V12 M9 4 V12" stroke="#9ba4b3"/></svg>
<div class="t" style="left:189px;top:298px;color:#333;letter-spacing:-0.06px"><u>В</u>ставить таблицу...</div>
<!-- item 2 highlighted -->
<div class="a" style="left:153px;top:313px;width:208px;height:28px;border:3px solid #e3131b;background:linear-gradient(#fef7dc,#fdeebb 35%,#fde49a 65%,#fdf0c4)"></div>
<div class="a" style="left:157px;top:317px;width:20px;height:21px;border:1px solid #f0a040;border-radius:3px;background:linear-gradient(#fef0c8,#fde3a0)"></div>
<svg class="a" style="left:160px;top:320px" width="16" height="15" viewBox="0 0 16 15"><rect x="0.5" y="3.5" width="12" height="11" fill="#eef3fb" stroke="#3d5a8c"/><rect x="1" y="4" width="11" height="2.5" fill="#4d86df"/><path d="M1 9.5 H12 M1 12 H12 M4.5 6.5 V14 M8.5 6.5 V14" stroke="#9ba4b3"/><path d="M6 11 L13 2.5 L15 4.5 L8 12.5 L5.5 13Z" fill="#f0c83a" stroke="#5a4a20" stroke-width="0.7"/><path d="M13 2.5 L14 1.2 L15.8 3.2 L15 4.5Z" fill="#e07a7a"/></svg>
<div class="t" style="left:189px;top:320px;color:#333;letter-spacing:0.00px"><u>Н</u>арисовать таблицу</div>
<!-- item 3 disabled -->
<svg class="a" style="left:161px;top:342px" width="15" height="14" viewBox="0 0 15 14"><path d="M1 1 H14" stroke="#9a9a9a"/><path d="M7.5 2 V6 M5.5 4.5 L7.5 6.5 L9.5 4.5" stroke="#9a9a9a" fill="none"/><rect x="1.5" y="7.5" width="12" height="6" fill="#f2f2f2" stroke="#a8a8a8"/><path d="M3 10.5 H12" stroke="#b5b5b5"/></svg>
<div class="t" style="left:189px;top:342px;color:#a7a7a7;letter-spacing:0.08px"><u>П</u>реобразовать в таблицу...</div>
<!-- item 4 -->
<svg class="a" style="left:160px;top:363px" width="16" height="15" viewBox="0 0 16 15"><rect x="0.5" y="0.5" width="12" height="11" fill="#eef3fb" stroke="#3d5a8c"/><rect x="1" y="1" width="11" height="2.5" fill="#4d86df"/><path d="M1 6 H12 M1 9 H12 M4.5 3.5 V11 M8.5 3.5 V11" stroke="#9ba4b3"/><rect x="6.5" y="6.5" width="9" height="8" fill="#fff" stroke="#1d7a2e"/><path d="M8.5 8.5 L13.5 12.8 M13.5 8.5 L8.5 12.8" stroke="#1d8a3a" stroke-width="1.6"/></svg>
<div class="t" style="left:189px;top:364px;color:#333;letter-spacing:-0.31px"><u>Т</u>аблица Excel</div>
<!-- item 5 -->
<svg class="a" style="left:161px;top:386px" width="15" height="13" viewBox="0 0 15 13"><rect x="0.5" y="0.5" width="13" height="12" fill="#eef3fb" stroke="#3d5a8c"/><rect x="1" y="1" width="12" height="3" fill="#4d86df"/><path d="M1 6.5 H13 M1 9.5 H13 M5 4 V12 M9 4 V12" stroke="#9ba4b3"/></svg>
<div class="t" style="left:189px;top:386px;color:#333;letter-spacing:-0.06px"><u>Э</u>кспресс-таблицы</div>
<svg class="a" style="left:346px;top:389px" width="4" height="7" viewBox="0 0 4 7"><path d="M0 0 L3.5 3.5 L0 7Z" fill="#808080"/></svg>

</body></html>
